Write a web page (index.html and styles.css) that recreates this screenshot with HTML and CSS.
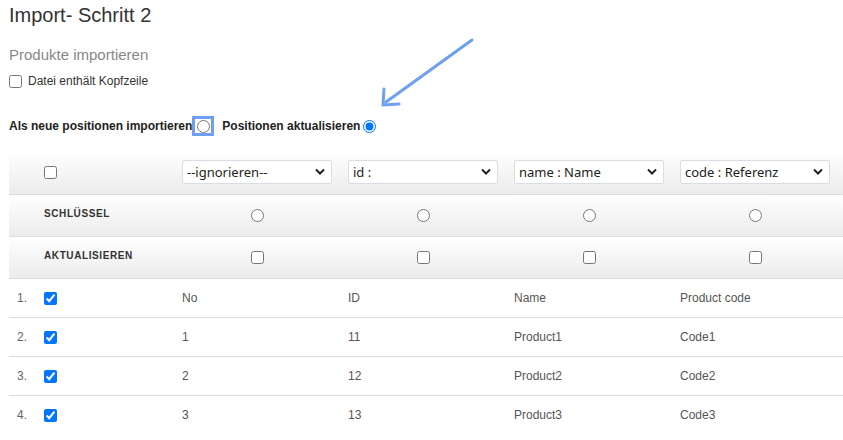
FILE: index.html
```html
<!DOCTYPE html>
<html lang="de">

<head>
  <meta charset="UTF-8">
  <title>Import- Schritt 2</title>
  <link rel="stylesheet" href="styles.css">
</head>

<body>
  <div class="page">
    <h1>Import- Schritt 2</h1>
    <h2>Produkte importieren</h2>

    <label class="header-check">
      <input type="checkbox"> Datei enthält Kopfzeile
    </label>

    <div class="mode-row">
      <span>Als neue positionen importieren</span>
      <span class="marked"><input type="radio" name="mode"></span>
      <span class="mode-second">Positionen aktualisieren</span>
      <input type="radio" name="mode" checked>
    </div>

    <table class="map-table">
      <colgroup>
        <col style="width: 27px">
        <col style="width: 138px">
        <col style="width: 166px">
        <col style="width: 166px">
        <col style="width: 166px">
        <col style="width: 171px">
      </colgroup>
      <tr class="head-row">
        <td></td>
        <td><input type="checkbox"></td>
        <td><select><option>--ignorieren--</option></select></td>
        <td><select><option>id :</option></select></td>
        <td><select><option>name : Name</option></select></td>
        <td><select><option>code : Referenz</option></select></td>
      </tr>
      <tr class="head-row opt-row">
        <td></td>
        <td class="label">SCHLÜSSEL</td>
        <td class="center"><input type="radio" name="key"></td>
        <td class="center"><input type="radio" name="key"></td>
        <td class="center"><input type="radio" name="key"></td>
        <td class="center"><input type="radio" name="key"></td>
      </tr>
      <tr class="head-row opt-row">
        <td></td>
        <td class="label">AKTUALISIEREN</td>
        <td class="center"><input type="checkbox"></td>
        <td class="center"><input type="checkbox"></td>
        <td class="center"><input type="checkbox"></td>
        <td class="center"><input type="checkbox"></td>
      </tr>
      <tr class="data-row">
        <td class="num">1.</td>
        <td><input type="checkbox" checked></td>
        <td>No</td>
        <td>ID</td>
        <td>Name</td>
        <td>Product code</td>
      </tr>
      <tr class="data-row">
        <td class="num">2.</td>
        <td><input type="checkbox" checked></td>
        <td>1</td>
        <td>11</td>
        <td>Product1</td>
        <td>Code1</td>
      </tr>
      <tr class="data-row">
        <td class="num">3.</td>
        <td><input type="checkbox" checked></td>
        <td>2</td>
        <td>12</td>
        <td>Product2</td>
        <td>Code2</td>
      </tr>
      <tr class="data-row">
        <td class="num">4.</td>
        <td><input type="checkbox" checked></td>
        <td>3</td>
        <td>13</td>
        <td>Product3</td>
        <td>Code3</td>
      </tr>
    </table>
  </div>

  <!-- annotation arrow -->
  <svg class="arrow" width="843" height="440" viewBox="0 0 843 440">
    <line x1="472" y1="40" x2="386" y2="102" stroke="#6e9ff0" stroke-width="3" stroke-linecap="round" />
    <polyline points="384,89 383,105 399,104" fill="none" stroke="#6e9ff0" stroke-width="3" stroke-linecap="round" stroke-linejoin="round" />
  </svg>
</body>

</html>
```

FILE: styles.css
```css
* {
  margin: 0;
  padding: 0;
  box-sizing: border-box;
}

body {
  background-color: #fff;
  font-family: "Liberation Sans", Arial, sans-serif;
  color: #333;
  overflow: hidden;
}

.page {
  padding: 3px 0 0 9px;
}

h1 {
  font-size: 20px;
  font-weight: normal;
  line-height: 24px;
  color: #333;
}

h2 {
  margin-top: 19px;
  font-size: 15px;
  font-weight: normal;
  line-height: 18px;
  color: #888;
}

.header-check {
  display: flex;
  align-items: center;
  gap: 6px;
  margin-top: 10px;
  font-size: 12px;
  color: #333;
}

.header-check input {
  margin: 0;
}

.mode-row {
  display: flex;
  align-items: center;
  margin-top: 28px;
  height: 20px;
  font-size: 12px;
  font-weight: bold;
  color: #222;
}

.mode-row input {
  margin: 0;
}

.marked {
  display: flex;
  align-items: center;
  justify-content: center;
  width: 22px;
  height: 20px;
  border: 3px solid #6e9ff0;
}

.mode-second {
  margin: 0 3px 0 8px;
}

/* mapping table */
.map-table {
  margin-top: 14px;
  width: 834px;
  border-collapse: collapse;
  table-layout: fixed;
  font-size: 12px;
  color: #555;
}

.map-table td {
  padding: 0 8px;
}

.map-table td:last-child {
  padding-right: 13px;
}

.map-table input {
  margin: 0;
  vertical-align: middle;
}

.head-row {
  background: linear-gradient(#fff, #ececec);
}

.head-row td {
  height: 44px;
  border-bottom: 1px solid #dcdcdc;
}

.opt-row td {
  height: 42px;
  vertical-align: top;
  padding-top: 13px;
}

.opt-row:last-of-type td {
  border-bottom: none;
}

.label {
  font-size: 10px;
  font-weight: bold;
  letter-spacing: 0.6px;
  color: #333;
}

.center {
  text-align: center;
}

.map-table select {
  appearance: none;
  width: 150px;
  height: 24px;
  padding: 0 22px 0 4px;
  border: 1px solid #d6dee6;
  border-radius: 2px;
  background: #fff url("data:image/svg+xml,%3Csvg xmlns='http://www.w3.org/2000/svg' width='10' height='7' viewBox='0 0 10 7'%3E%3Cpath d='M1 1.5l4 4 4-4' fill='none' stroke='%23222' stroke-width='2'/%3E%3C/svg%3E") no-repeat right 6px center;
  font-family: "Noto Sans", sans-serif;
  font-size: 13px;
  color: #222;
  vertical-align: middle;
}

.data-row td {
  height: 39px;
  border-bottom: 1px solid #dcdcdc;
}

.data-row:last-child td {
  border-bottom: none;
}

.num {
  color: #666;
}

.arrow {
  position: absolute;
  left: 0;
  top: 0;
  pointer-events: none;
}
```
